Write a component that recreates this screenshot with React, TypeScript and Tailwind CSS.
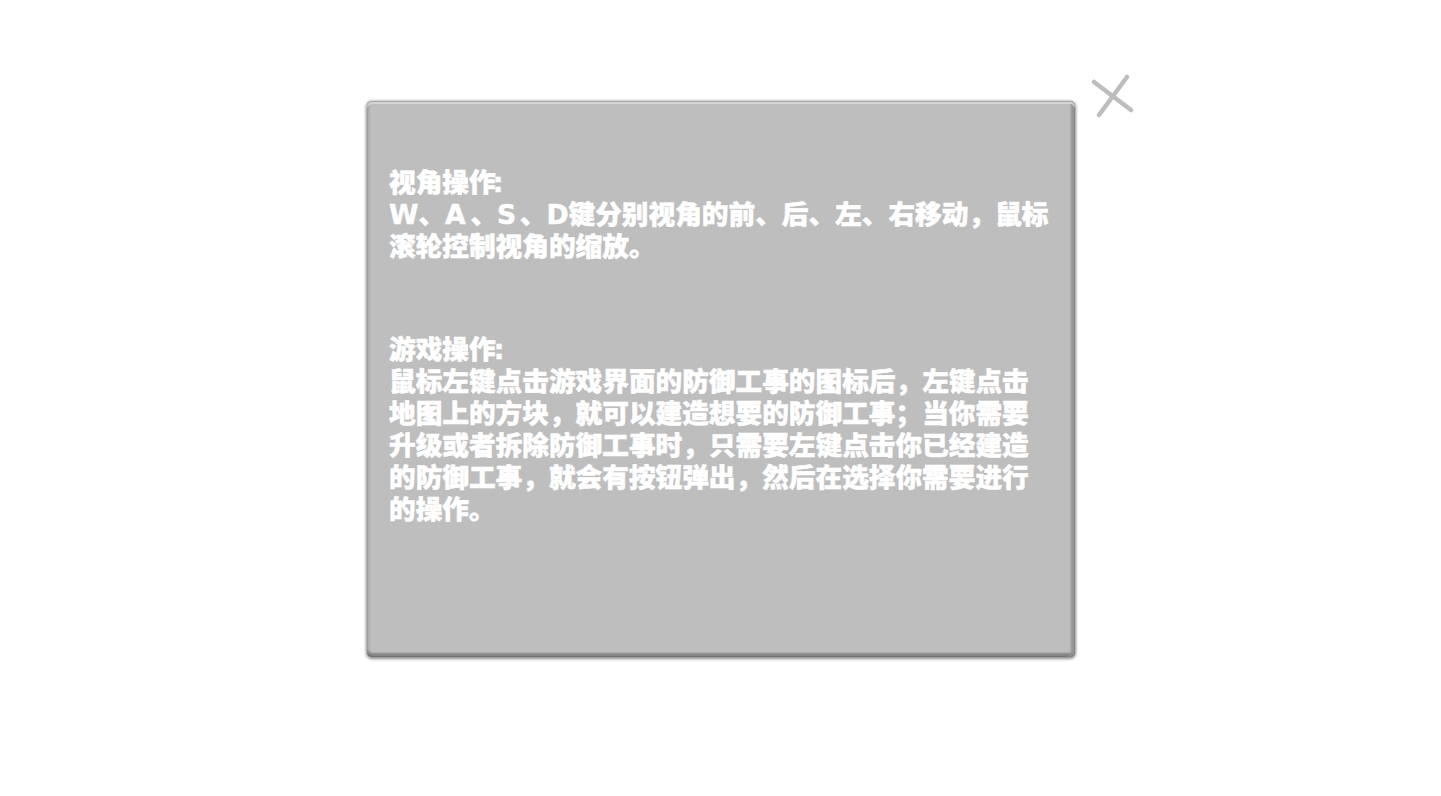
const C = "\uFF0C";
const S = "\uFF1B";

export default function App() {
  return (
    <div className="min-h-[796px] bg-white pt-[101px] font-['DejaVu_Sans','Noto_Sans_CJK_SC',sans-serif]">
      <div className="relative ml-[367px] h-[556px] w-[708px] rounded-[5px] bg-[#bebebe] pl-[22px] pt-[66px] font-black text-[26.67px] leading-[32px] text-white shadow-[0_1px_3px_1px_rgba(0,0,0,0.45),inset_0_1px_0_#a6a6a6,inset_0_3px_1px_#d6d6d6,inset_-1px_0_0_#7a7a7a,inset_-4px_0_2px_#949494,inset_0_-1px_0_#666666,inset_0_-4px_2px_#848484,inset_1px_0_0_#a0a0a0,inset_3px_0_1px_#b0b0b0] [-webkit-text-stroke:0.5px_white]">
        <div className="w-[664px]">
          <p>视角操作<span className="-ml-[3px]">:</span></p>
          <p>
            W、<span className="tracking-[4.7px]">A</span>、<span className="tracking-[3.5px]">S</span>、D键分别视角的前、后、左、右移动{C}鼠标滚轮控制视角的缩放。
          </p>
          <p className="mt-[71px]">游戏操作<span className="-ml-[2px]">:</span></p>
          <p>
            鼠标左键点击游戏界面的防御工事的图标后{C}左键点击地图上的方块{C}就可以建造想要的防御工事{S}当你需要升级或者拆除防御工事时{C}只需要左键点击你已经建造的防御工事{C}就会有按钮弹出{C}然后在选择你需要进行的操作。
          </p>
        </div>
        <svg className="absolute left-[724px] top-[-27px]" width="44" height="44" viewBox="0 0 44 44" fill="none" stroke="#bdbdbd" strokeWidth="4.5" strokeLinecap="round">
          <path d="M3 8 L40 36" />
          <path d="M36 3 L8 41" />
        </svg>
      </div>
    </div>
  );
}
